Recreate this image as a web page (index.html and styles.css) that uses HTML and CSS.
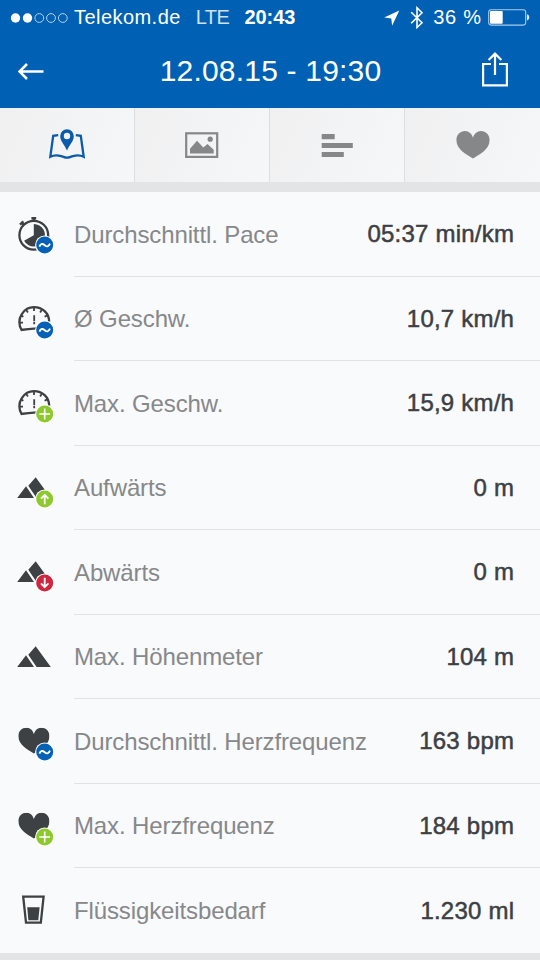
FILE: index.html
```html
<!DOCTYPE html>
<html lang="de">
<head>
<meta charset="utf-8">
<title>12.08.15 - 19:30</title>
<link rel="stylesheet" href="styles.css">
</head>
<body>
<svg class="defs" aria-hidden="true">
  <symbol id="avg" viewBox="0 0 20 20"><circle cx="10" cy="10" r="9.6" fill="#fff"/><circle cx="10" cy="10" r="8.5" fill="#0561b5"/><path d="M4.7 11.6C6 8.4 8 8.4 10 10.2S13.7 12 15.3 8.6" fill="none" stroke="#fff" stroke-width="1.9"/></symbol>
  <symbol id="plus" viewBox="0 0 20 20"><circle cx="10" cy="10" r="9.6" fill="#fff"/><circle cx="10" cy="10" r="8.5" fill="#8dc92c"/><path d="M10 4.6v10.8M4.6 10h10.8" stroke="#fff" stroke-width="1.6"/></symbol>
  <symbol id="up" viewBox="0 0 20 20"><circle cx="10" cy="10" r="9.6" fill="#fff"/><circle cx="10" cy="10" r="8.5" fill="#8dc92c"/><path d="M10 15.3V5.8M6.3 9.6L10 5.8l3.7 3.8" fill="none" stroke="#fff" stroke-width="1.8"/></symbol>
  <symbol id="down" viewBox="0 0 20 20"><circle cx="10" cy="10" r="9.6" fill="#fff"/><circle cx="10" cy="10" r="8.5" fill="#cf2640"/><path d="M10 4.7v9.5M6.3 10.4l3.7 3.8 3.7-3.8" fill="none" stroke="#fff" stroke-width="1.8"/></symbol>
  <symbol id="gauge" viewBox="0 0 40 40"><g fill="none" stroke="#3d4144"><path d="M5.6 31C2.8 26.5 2.4 20 5.8 15.1C8.6 10.8 13 8.2 18 8.2C26.3 8.2 33 14 33.2 22.6M4.6 31Q12 29.9 21 29.4" stroke-width="2.3"/><path d="M18 8.5v3.6M10.3 11l1.6 2.5M25.7 11l-1.6 2.5M4.8 16.4l2.6 1.4M31.2 16.4l-2.6 1.4M3.8 23.6h3.2M29.2 23.6h3" stroke-width="1.8"/><path d="M18.2 16.3v6M18.2 23v2.2" stroke-width="1.8"/></g></symbol>
  <symbol id="peaks" viewBox="0 0 40 40"><path d="M1.2 30L10 18.2 18 30zM12.3 17.8L19.7 9.3 34.8 30H20.6z" fill="#3d4144"/></symbol>
  <symbol id="heart" viewBox="0 0 32 27"><path d="M16 26.6C10 22.6 0 18 0 8.6C0 3.6 3.8 0 8.3 0C12 0 15.2 2.8 16 6.8C16.8 2.8 20 0 23.7 0C28.2 0 32 3.6 32 8.6C32 18 22 22.6 16 26.6Z" fill="currentColor"/></symbol>
</svg>
<div class="screen">
  <header class="header">
    <div class="status">
      <svg class="signal" width="60" height="12" viewBox="0 0 60 12"><circle cx="5.5" cy="6" r="4.7" fill="#fff"/><circle cx="17.5" cy="6" r="4.7" fill="#fff"/><g fill="none" stroke="#b5d3f0" stroke-width="1"><circle cx="29.3" cy="6" r="4.4"/><circle cx="41" cy="6" r="4.4"/><circle cx="52.8" cy="6" r="4.4"/></g></svg>
      <span class="carrier">Telekom.de</span>
      <span class="network">LTE</span>
      <span class="clock">20:43</span>
      <svg class="loc" width="16" height="16" viewBox="0 0 16 16"><path d="M15.3.5L.2 7.5l7.1 1.1.8 7.1z" fill="#fff"/></svg>
      <svg class="bt" width="14" height="24" viewBox="0 0 14 24"><path d="M1.2 6.2L12 16.8 7 21.5V1.8l5 4.9L1.2 17.2" fill="none" stroke="#fff" stroke-width="1.6"/></svg>
      <span class="percent">36 %</span>
      <svg class="battery" width="42" height="17" viewBox="0 0 42 17"><rect x=".7" y=".7" width="37" height="15.4" rx="2.5" fill="none" stroke="#a9cbea" stroke-width="1.1"/><rect x="2" y="2" width="12.7" height="12.8" rx="1" fill="#fff"/><path d="M39 5.3c3 .5 3 5.7 0 6.2z" fill="#d8e8f7"/></svg>
    </div>
    <div class="nav">
      <svg class="back" width="26" height="17" viewBox="0 0 26 17"><path d="M25.5 8.5H1.6M9 1L1.6 8.5 9 16" fill="none" stroke="#fff" stroke-width="2.5"/></svg>
      <h1 class="title">12.08.15 - 19:30</h1>
      <svg class="share" width="26" height="35" viewBox="0 0 26 35"><path d="M9 12H1.1v21.3h23.8V12H17M13 23V1.5M6.6 8L13 1.6 19.4 8" fill="none" stroke="#fff" stroke-width="2.2"/></svg>
    </div>
  </header>
  <nav class="tabs">
    <div class="tab map-tab"><svg width="36" height="30" viewBox="0 0 36 30"><path d="M9.2 6.2L4.2 6.8 1.3 27.8C6 25.3 9 26.2 12 27.1S16 28.7 18 28.7 21 28 24 27.1 30 25.3 34.7 27.8L31.8 6.8 26.8 6.2" fill="none" stroke="#0a5caa" stroke-width="2.3"/><path fill-rule="evenodd" d="M18 21.5C15.5 15.5 11.2 12.5 11.2 7A6.8 6.8 0 0 1 24.8 7C24.8 12.5 20.5 15.5 18 21.5ZM18 3.8A3.2 3.2 0 1 0 18 10.2 3.2 3.2 0 1 0 18 3.8Z" fill="#0a5caa"/></svg></div>
    <div class="tab"><svg width="34" height="26" viewBox="0 0 34 26"><rect x="1.2" y="1.3" width="31" height="23.6" fill="none" stroke="#858789" stroke-width="2.2"/><path d="M5 21.6v-4.8L12 8.7l6.3 6.8 4.2-3.6 6.2 5.8v3.9z" fill="#858789"/><circle cx="25.2" cy="7.2" r="2.6" fill="#858789"/></svg></div>
    <div class="tab bars-tab"><svg width="32" height="26" viewBox="0 0 32 26"><path d="M.7 1h13v5.3H.7zM.7 10h31.1v5H.7zM.7 19h22.1v5H.7z" fill="#858789"/></svg></div>
    <div class="tab heart-tab"><svg width="34" height="28"><use href="#heart"/></svg></div>
  </nav>
  <main class="list">
    <div class="row"><svg class="icon" viewBox="0 0 40 40"><circle cx="17.8" cy="21.2" r="14.4" fill="none" stroke="#3d4144" stroke-width="2.3"/><path d="M17.8 3v4M15.4 4.2h4.8M5.4 8.4l3 3M4 10.6l3.4-3.2" stroke="#3d4144" stroke-width="2.4"/><path d="M17.8 21.2V10A11.2 11.2 0 1 1 8.1 26.8Z" fill="#3d4144"/><use href="#avg" x="18.7" y="21" width="20" height="20"/></svg>
      <div class="cell"><span class="label">Durchschnittl. Pace</span><span class="value">05:37 min/km</span></div></div>
    <div class="row"><svg class="icon" viewBox="0 0 40 40"><use href="#gauge" width="40" height="40"/><use href="#avg" x="18.7" y="21" width="20" height="20"/></svg>
      <div class="cell"><span class="label">Ø Geschw.</span><span class="value">10,7 km/h</span></div></div>
    <div class="row"><svg class="icon" viewBox="0 0 40 40"><use href="#gauge" width="40" height="40"/><use href="#plus" x="18.7" y="21" width="20" height="20"/></svg>
      <div class="cell"><span class="label">Max. Geschw.</span><span class="value">15,9 km/h</span></div></div>
    <div class="row"><svg class="icon" viewBox="0 0 40 40"><use href="#peaks" width="40" height="40"/><use href="#up" x="18.7" y="21" width="20" height="20"/></svg>
      <div class="cell"><span class="label">Aufwärts</span><span class="value">0 m</span></div></div>
    <div class="row"><svg class="icon" viewBox="0 0 40 40"><use href="#peaks" width="40" height="40"/><use href="#down" x="18.7" y="21" width="20" height="20"/></svg>
      <div class="cell"><span class="label">Abwärts</span><span class="value">0 m</span></div></div>
    <div class="row"><svg class="icon" viewBox="0 0 40 40"><use href="#peaks" width="40" height="40"/></svg>
      <div class="cell"><span class="label">Max. Höhenmeter</span><span class="value">104 m</span></div></div>
    <div class="row"><svg class="icon" viewBox="0 0 40 40"><use href="#heart" x="2.3" y="6.7" width="31.2" height="26.3"/><use href="#avg" x="18.7" y="21" width="20" height="20"/></svg>
      <div class="cell"><span class="label">Durchschnittl. Herzfrequenz</span><span class="value">163 bpm</span></div></div>
    <div class="row"><svg class="icon" viewBox="0 0 40 40"><use href="#heart" x="2.3" y="6.7" width="31.2" height="26.3"/><use href="#plus" x="18.7" y="21" width="20" height="20"/></svg>
      <div class="cell"><span class="label">Max. Herzfrequenz</span><span class="value">184 bpm</span></div></div>
    <div class="row"><svg class="icon" viewBox="0 0 40 40"><path d="M7.2 6.6H27.6L24.8 32.6H10z" fill="none" stroke="#3d4144" stroke-width="2.3"/><path d="M11.2 17.3h12.4l-1.3 13H12.4z" fill="#3d4144"/></svg>
      <div class="cell"><span class="label">Flüssigkeitsbedarf</span><span class="value">1.230 ml</span></div></div>
  </main>
</div>
</body>
</html>
```
FILE: styles.css
```css
* { box-sizing: border-box; }

body {
  margin: 0;
  font-family: "Liberation Sans", sans-serif;
}

svg { display: block; flex: none; }

.defs { display: none; }

.screen {
  width: 540px;
  height: 960px;
  overflow: hidden;
  background: #e2e4e6;
}

.header {
  height: 108px;
  background: #0060b3;
  color: #fff;
}

.status {
  display: flex;
  align-items: center;
  height: 34px;
  padding: 1px 10px 0 10px;
  font-size: 20px;
  white-space: nowrap;
}

.carrier { width: 122px; margin-left: 4px; letter-spacing: 0.45px; }
.network { width: 49px; letter-spacing: -0.5px; color: #cfe1f3; }
.clock { width: 140px; font-weight: bold; letter-spacing: -0.1px; }
.bt { margin-left: 10px; }
.percent { width: 55px; margin-left: 9px; letter-spacing: 0.75px; }

.nav {
  display: flex;
  align-items: center;
  justify-content: space-between;
  height: 74px;
  padding: 0 32px 0 18px;
}

.title {
  margin: 0 0 0 15px;
  font-size: 30px;
  font-weight: normal;
  letter-spacing: 0.2px;
}

.share { margin-top: -4px; }

.tabs {
  display: grid;
  grid-template-columns: repeat(4, 1fr);
  height: 74px;
  background: #f3f4f5;
}

.tab {
  display: flex;
  align-items: center;
  justify-content: center;
  border-right: 1px solid #dcdee0;
  background: linear-gradient(115deg, #f0f0f1, #f6f7f8);
}

.tab:last-child { border-right: 0; }

.map-tab { padding-bottom: 2px; }
.bars-tab { padding-top: 2px; }
.heart-tab { color: #858789; }

.list {
  margin-top: 10px;
  background: #f9fafc;
}

.row {
  display: flex;
  align-items: center;
  height: 84.5px;
  padding-left: 16px;
}

.icon {
  width: 40px;
  height: 40px;
  color: #3d4144;
  overflow: visible;
}

.cell {
  display: flex;
  flex: 1;
  align-items: center;
  justify-content: space-between;
  height: 100%;
  margin-left: 18px;
  padding: 1px 26px 0 0;
  border-bottom: 1px solid #e0e2e4;
  font-size: 24px;
  white-space: nowrap;
}

.row:last-child .cell { border-bottom: 0; }

.label {
  padding-top: 1px;
  letter-spacing: -0.12px;
  color: #86888a;
}

.value {
  margin-right: -0.2px;
  letter-spacing: 0.22px;
  color: #3d4043;
  -webkit-text-stroke: 0.5px #3d4043;
}
```
